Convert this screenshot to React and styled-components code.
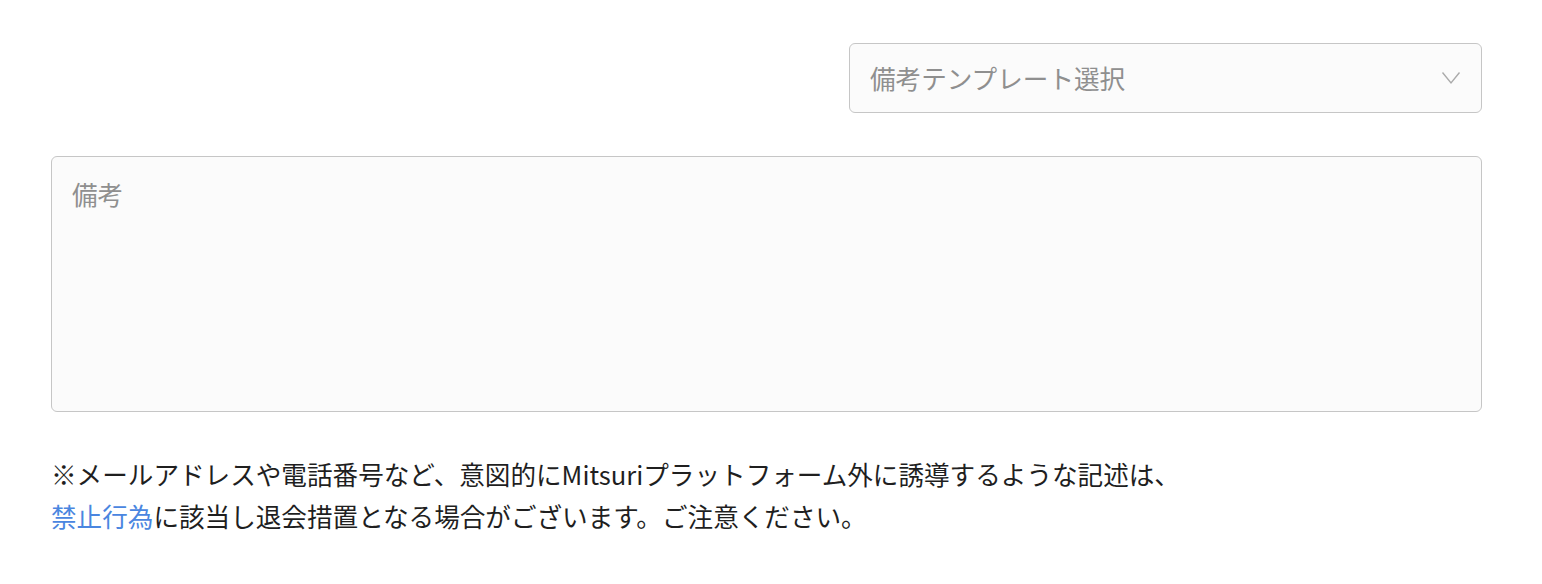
import React from "react";
import styled, { createGlobalStyle } from "styled-components";

const Global = createGlobalStyle`
  html, body { margin: 0; padding: 0; background: #fff; }
  body { font-family: "Noto Sans CJK JP", "Noto Sans", sans-serif; }
  * { box-sizing: border-box; }
`;

const Page = styled.div`
  padding: 43px 60px 40px 51px;
  display: flex;
  flex-direction: column;
`;

const SelectRow = styled.div`
  display: flex;
  justify-content: flex-end;
`;

const Select = styled.div`
  width: 633px;
  height: 70px;
  border: 1px solid #c6c6c6;
  border-radius: 6px;
  background: #fbfbfb;
  display: flex;
  align-items: center;
  justify-content: space-between;
  padding: 0 20px 0 20px;
`;

const Placeholder = styled.span`
  font-size: 25.6px;
  color: #8f8f8f;
  line-height: 1;
`;

const TextArea = styled.div`
  margin-top: 43px;
  height: 256px;
  border: 1px solid #c6c6c6;
  border-radius: 6px;
  background: #fbfbfb;
  padding: 24px 20px;
`;

const Note = styled.p`
  margin: 41px 0 0;
  font-size: 25.6px;
  line-height: 42px;
  color: #1f1f1f;
`;

const Link = styled.a`
  color: #4a86e0;
  text-decoration: none;
`;

const Chevron = () => (
  <svg width="20" height="14" viewBox="0 0 20 14" fill="none">
    <path d="M1.5 1.5 L10 12 L18.5 1.5" stroke="#ababab" strokeWidth="1.4" />
  </svg>
);

export default function App() {
  return (
    <>
      <Global />
      <Page>
        <SelectRow>
          <Select>
            <Placeholder>備考テンプレート選択</Placeholder>
            <Chevron />
          </Select>
        </SelectRow>
        <TextArea>
          <Placeholder>備考</Placeholder>
        </TextArea>
        <Note>
          ※メールアドレスや電話番号など、意図的にMitsuriプラットフォーム外に誘導するような記述は、
          <br />
          <Link href="#">禁止行為</Link>に該当し退会措置となる場合がございます。ご注意ください。
        </Note>
      </Page>
    </>
  );
}
